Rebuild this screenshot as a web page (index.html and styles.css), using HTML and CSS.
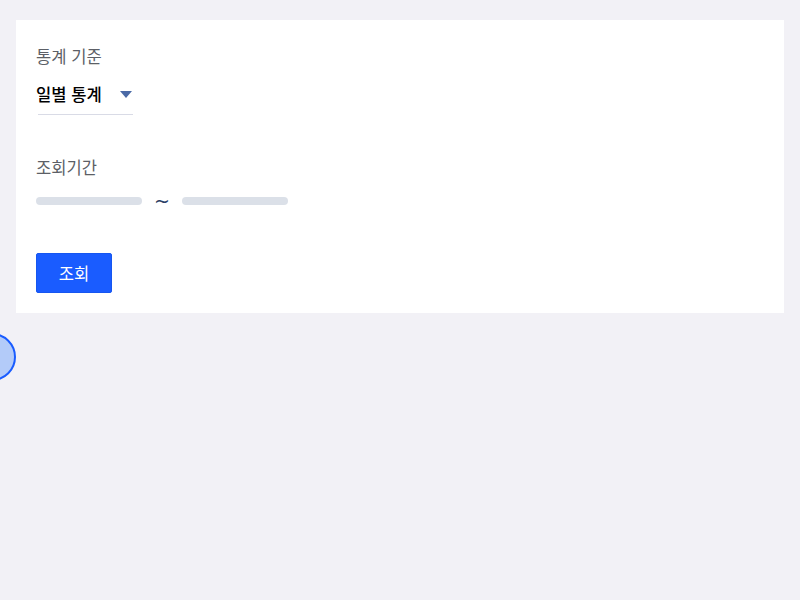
FILE: index.html
```html
<!DOCTYPE html>
<html lang="ko">
<head>
<meta charset="utf-8">
<title>통계</title>
<link rel="stylesheet" href="styles.css">
</head>
<body>
<div class="card">
  <div class="label">통계 기준</div>
  <div class="select">
    <span class="select-text">일별 통계</span>
    <svg class="caret" width="12" height="7" viewBox="0 0 12 7"><path d="M0 0H12L6 7Z" fill="#4b6aa6"/></svg>
  </div>
  <div class="label label-period">조회기간</div>
  <div class="range">
    <span class="bar"></span>
    <span class="tilde">~</span>
    <span class="bar"></span>
  </div>
  <button class="btn">조회</button>
</div>
<div class="fab"></div>
</body>
</html>
```
FILE: styles.css
```css
html, body {
  margin: 0;
  padding: 0;
  background: #f2f1f6;
  font-family: "Noto Sans CJK KR", "Noto Sans", sans-serif;
}
.card {
  margin: 20px 16px 0;
  padding: 24px 20px 20px;
  background: #ffffff;
}
.label {
  font-size: 16.6px;
  line-height: 24px;
  color: #5c5f66;
}
.select {
  display: flex;
  align-items: center;
  width: 95px;
  margin: 14px 0 0 2px;
  padding-bottom: 8px;
  border-bottom: 1px solid #d9dbe6;
  height: 24px;
}
.select-text {
  flex-shrink: 0;
  white-space: nowrap;
  margin-left: -2px;
  font-size: 16.6px;
  line-height: 24px;
  color: #000000;
  font-weight: 500;
}
.caret {
  flex-shrink: 0;
  margin-left: 18px;
  margin-top: 1px;
}
.label-period {
  margin-top: 40px;
}
.range {
  display: flex;
  align-items: center;
  margin-top: 18px;
  height: 8px;
}
.bar {
  width: 106px;
  height: 8px;
  border-radius: 4px;
  background: #dbe0e8;
}
.tilde {
  width: 40px;
  text-align: center;
  font-size: 19px;
  line-height: 8px;
  color: #2c3e66;
  font-family: "DejaVu Sans", sans-serif;
}
.btn {
  display: block;
  margin-top: 48px;
  width: 76px;
  height: 40px;
  border: 1px solid #1656f0;
  border-radius: 2px;
  background: #1a5cff;
  color: #ffffff;
  font-family: "Noto Sans CJK KR", "Noto Sans", sans-serif;
  font-size: 16.6px;
  padding: 0;
}
.fab {
  box-sizing: border-box;
  width: 48px;
  height: 48px;
  margin: 20px 0 0 -32px;
  border-radius: 50%;
  border: 2px solid #1a5cff;
  background: #b3cbf9;
}
```
